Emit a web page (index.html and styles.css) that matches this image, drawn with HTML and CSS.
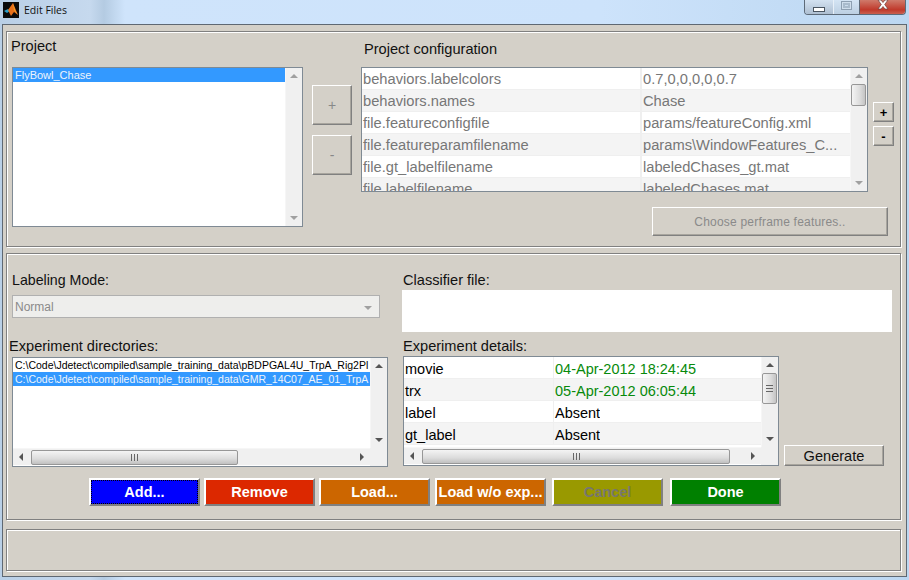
FILE: index.html
```html
<!DOCTYPE html>
<html lang="en">
<head>
    <meta charset="UTF-8">
    <title>Edit Files</title>
    <link rel="stylesheet" href="styles.css">
</head>
<body>

<!-- Title bar -->
<div class="titlebar">
    <svg class="app-icon" width="16" height="16" viewBox="0 0 16 16">
        <rect width="16" height="16" fill="#0a0a0a"/>
        <path d="M1 9 L5 7 L7 9 L4 11 Z" fill="#2a9fc9"/>
        <path d="M5 8 L10 1 L15 13 L11 10 L8 14 L6 10 Z" fill="#e8701a"/>
        <path d="M10 1 L12 8 L15 13 L11 8 Z" fill="#f5b02e"/>
    </svg>
    <span class="title-text">Edit Files</span>
    <div class="win-controls">
        <div class="win-btn win-min"><span></span></div>
        <div class="win-btn win-max"><span></span></div>
        <div class="win-btn win-close">
            <svg width="16" height="11" viewBox="0 0 16 11"><path d="M3 0 L6 0 L8 2.5 L10 0 L13 0 L9.700 4.500 L13 9 L10 9 L8 6.500 L6 9 L3 9 L6.300 4.500 Z" fill="#fff" stroke="#6b3a36" stroke-width="0.7"/></svg>
        </div>
    </div>
</div>

<div class="window">

    <!-- Project section -->
    <div class="panel panel-project">
        <div class="project-col">
            <div class="label project-label">Project</div>
            <div class="view project-list">
                <div class="view-main">
                    <div class="list-row selected">FlyBowl_Chase</div>
                </div>
                <div class="vscroll">
                    <span class="arrow up"></span>
                    <span class="track"></span>
                    <span class="arrow down"></span>
                </div>
            </div>
        </div>

        <div class="addremove-col">
            <button class="btn big-btn">+</button>
            <button class="btn big-btn">-</button>
        </div>

        <div class="config-col">
            <div class="label config-label">Project configuration</div>
            <div class="config-row">
                <div class="view config-table">
                    <div class="view-main">
                        <div class="row"><div class="cell key">behaviors.labelcolors</div><div class="cell">0.7,0,0,0,0,0.7</div></div>
                        <div class="row alt"><div class="cell key">behaviors.names</div><div class="cell">Chase</div></div>
                        <div class="row"><div class="cell key">file.featureconfigfile</div><div class="cell">params/featureConfig.xml</div></div>
                        <div class="row alt"><div class="cell key">file.featureparamfilename</div><div class="cell">params\WindowFeatures_C...</div></div>
                        <div class="row"><div class="cell key">file.gt_labelfilename</div><div class="cell">labeledChases_gt.mat</div></div>
                        <div class="row alt"><div class="cell key">file.labelfilename</div><div class="cell">labeledChases.mat</div></div>
                    </div>
                    <div class="vscroll">
                        <span class="arrow up"></span>
                        <span class="track"><span class="thumb thumb-config"></span></span>
                        <span class="arrow down"></span>
                    </div>
                </div>
                <div class="small-btns">
                    <button class="btn small-btn">+</button>
                    <button class="btn small-btn">-</button>
                </div>
            </div>
            <button class="btn perframe-btn">Choose perframe features..</button>
        </div>
    </div>

    <!-- Experiments section -->
    <div class="panel panel-exp">
        <div class="exp-grid">
            <div class="exp-left">
                <div class="label mode-label">Labeling Mode:</div>
                <div class="select">Normal<span class="arrow down"></span></div>
                <div class="label dirs-label">Experiment directories:</div>
                <div class="view exp-view">
                    <div class="view-main">
                        <div class="list-row dir-row">C:\Code\Jdetect\compiled\sample_training_data\pBDPGAL4U_TrpA_Rig2Pl</div>
                        <div class="list-row dir-row selected">C:\Code\Jdetect\compiled\sample_training_data\GMR_14C07_AE_01_TrpA</div>
                    </div>
                    <div class="vscroll">
                        <span class="arrow up"></span>
                        <span class="track"></span>
                        <span class="arrow down"></span>
                    </div>
                    <div class="hscroll">
                        <span class="arrow left"></span>
                        <span class="track"><span class="hthumb hthumb-dirs"><i></i></span></span>
                        <span class="arrow right"></span>
                    </div>
                    <div class="corner"></div>
                </div>
            </div>

            <div class="exp-right">
                <div class="label classifier-label">Classifier file:</div>
                <div class="classifier-box"></div>
                <div class="label details-label">Experiment details:</div>
                <div class="details-row">
                    <div class="view exp-view details-view">
                        <div class="view-main">
                            <div class="row"><div class="cell dkey">movie</div><div class="cell good">04-Apr-2012 18:24:45</div></div>
                            <div class="row alt"><div class="cell dkey">trx</div><div class="cell good">05-Apr-2012 06:05:44</div></div>
                            <div class="row"><div class="cell dkey">label</div><div class="cell">Absent</div></div>
                            <div class="row alt"><div class="cell dkey">gt_label</div><div class="cell">Absent</div></div>
                        </div>
                        <div class="vscroll">
                            <span class="arrow up"></span>
                            <span class="track"><span class="thumb thumb-details"><i></i></span></span>
                            <span class="arrow down"></span>
                        </div>
                        <div class="hscroll">
                            <span class="arrow left"></span>
                            <span class="track"><span class="hthumb hthumb-details"><i></i></span></span>
                            <span class="arrow right"></span>
                        </div>
                        <div class="corner"></div>
                    </div>
                    <button class="btn generate-btn">Generate</button>
                </div>
            </div>
        </div>

        <div class="action-row">
            <button class="btn action add"><span>Add...</span></button>
            <button class="btn action remove">Remove</button>
            <button class="btn action load">Load...</button>
            <button class="btn action load wo">Load w/o exp...</button>
            <button class="btn action cancel">Cancel</button>
            <button class="btn action done">Done</button>
        </div>
    </div>

    <!-- Status bar -->
    <div class="panel panel-status"></div>
</div>

</body>
</html>
```

FILE: styles.css
```css
* { box-sizing: border-box; }
html, body { height: 100%; }
body {
    margin: 0;
    width: 909px;
    height: 580px;
    overflow: hidden;
    font-family: "Liberation Sans", Arial, sans-serif;
    background: linear-gradient(90deg, #b9cfe6 0, #c6d9ee 90px, #b4cbe2 104px, #cfe4fb 125px, #cde3fb 600px, #bcd7f1 909px);
}

/* title bar */
.titlebar { height: 24px; display: flex; align-items: flex-start; padding-left: 3px; }
.app-icon { margin-top: 2px; }
.title-text { font-family: "Open Sans", sans-serif; font-size: 10.5px; line-height: 16px; margin: 2px 0 0 5px; color: #111; }
.win-controls { margin-left: auto; margin-right: 3px; display: flex; height: 15px; border: 1px solid #5d6a78; border-top: 0; border-radius: 0 0 4px 4px; overflow: hidden; }
.win-btn { display: flex; align-items: center; justify-content: center; }
.win-min { width: 29px; background: linear-gradient(#d3e2f1, #aebfd1); border-right: 1px solid #e8f0f8; }
.win-min span { width: 12px; height: 5px; margin-top: 5px; background: #fff; border: 1px solid #4a5561; }
.win-max { width: 26px; background: linear-gradient(#d4e4f4, #bccfe2); border-right: 1px solid #5d6a78; }
.win-max span { width: 11px; height: 9px; margin-bottom: 3px; border: 1px solid #8ea0b2; box-shadow: inset 0 0 0 1px #cfdeec, inset 0 0 0 3px #a9bbcc; }
.win-close { width: 45px; align-items: flex-start; background: linear-gradient(#cf7a6b, #c0392b 70%, #c9604f); }

/* window body */
.window {
    height: 553px;
    margin: 0 2px 0 2px;
    padding: 6px 5px 6px 3px;
    background: #d4d0c8;
    border: 1px solid #5f6872;
}
.panel {
    border: 1px solid #808080;
    box-shadow: 1px 1px 0 #fff, inset 1px 1px 0 #fff;
}
.panel-project { height: 216px; display: flex; padding: 0 0 0 5px; }
.panel-exp { height: 267px; margin-top: 6px; padding: 0; }
.panel-status { height: 42px; margin-top: 9px; }

.label { font-size: 14.6px; line-height: 16px; color: #111; }

/* scrolled views */
.view { display: grid; grid-template-columns: 1fr 17px; background: #fff; border: 1px solid #7f8a94; }
.view-main { overflow: hidden; min-width: 0; }
.vscroll { display: flex; flex-direction: column; align-items: center; background: #f0f0f0; border-left: 1px solid #f6f6f6; }
.hscroll { display: flex; align-items: center; background: #f0f0f0; border-top: 1px solid #f6f6f6; height: 17px; }
.corner { background: #f0f0f0; }
.track { flex: 1; position: relative; align-self: stretch; display: flex; }
.vscroll .arrow.up { margin-top: 6px; }
.vscroll .arrow.down { margin-bottom: 6px; }
.arrow { width: 0; height: 0; flex: none; border: 4px solid transparent; }
.arrow.up { border-top: 0; border-bottom: 4px solid #a0a0a0; }
.arrow.down { border-bottom: 0; border-top: 4px solid #a0a0a0; }
.arrow.left { border-left: 0; border-right: 4px solid #555; margin-left: 6px; }
.arrow.right { border-right: 0; border-left: 4px solid #555; margin-right: 6px; }
.exp-view .arrow.up { border-bottom-color: #555; }
.exp-view .arrow.down { border-top-color: #555; }
.thumb { display: flex; align-items: center; justify-content: center; width: 15px; background: linear-gradient(90deg, #f4f4f4, #dcdcdc 60%, #c4c4c4); border: 1px solid #979797; border-radius: 2px; }
.thumb i { width: 7px; height: 7px; border-top: 1px solid #666; border-bottom: 1px solid #666; background: linear-gradient(#fff0 2px, #666 2px, #666 3px, #fff0 3px); }
.hthumb { display: flex; align-items: center; justify-content: center; height: 15px; margin-top: 1px; background: linear-gradient(#f4f4f4, #dcdcdc 60%, #c0c0c0); border: 1px solid #979797; border-radius: 2px; }
.hthumb i { width: 7px; height: 7px; border-left: 1px solid #666; border-right: 1px solid #666; background: linear-gradient(90deg, #fff0 2px, #666 2px, #666 3px, #fff0 3px); }

.list-row { font-size: 11px; line-height: 14px; padding-left: 2px; white-space: nowrap; overflow: hidden; color: #000; }
.list-row.selected { background: #3399ff; color: #eef4fb; }

/* generic buttons */
.btn {
    display: block;
    padding: 0;
    font-family: "Liberation Sans", Arial, sans-serif;
    background: #d4d0c8;
    border: 1px solid;
    border-color: #fff #808080 #808080 #fff;
    box-shadow: inset -1px -1px 0 #a8a59e;
}

/* project section */
.project-col { width: 291px; flex: none; }
.project-label { margin: 6px 0 0 -1px; }
.project-list { height: 160px; margin-top: 13px; }
.addremove-col { width: 58px; flex: none; padding: 53px 0 0 9px; }
.big-btn { width: 40px; height: 40px; font-size: 14px; color: #888; }
.big-btn + .big-btn { margin-top: 10px; }

.config-col { flex: 1; min-width: 0; }
.config-label { margin: 9px 0 0 3px; }
.config-row { display: flex; margin-top: 10px; }
.config-table { width: 507px; height: 125px; }
.row { display: flex; height: 22px; border-bottom: 1px solid #efefef; }
.row.alt { background: #f4f4f4; }
.cell { font-size: 14.5px; line-height: 21px; padding-left: 1px; white-space: nowrap; overflow: hidden; }
.config-table .view-main { color: #777; }
.config-table .cell { flex: none; width: 203px; padding-top: 1px; font-size: 14.7px; }
.config-table .cell.key { width: 280px; border-right: 2px solid #efefef; }
.small-btns { padding: 35px 0 0 5px; }
.small-btn { width: 21px; height: 20px; font-size: 13px; font-weight: bold; color: #000; }
.small-btn + .small-btn { margin-top: 4px; }
.thumb-config { height: 22px; margin-top: 6px; }
.perframe-btn { width: 236px; height: 29px; margin: 15px 0 0 291px; font-size: 12px; color: #8a8a8a; letter-spacing: 0.2px; }

/* experiments section */
.exp-grid { display: flex; height: 212px; }
.exp-left { width: 396px; flex: none; padding-left: 5px; }
.mode-label { margin: 18px 0 0 0; font-size: 14.2px; }
.select { position: relative; width: 368px; height: 23px; margin-top: 7px; padding-left: 2px; font-size: 12px; line-height: 22px; color: #8a8a8a; background: #eeeeec; border: 1px solid #b0b0b0; }
.select .arrow { position: absolute; right: 7px; top: 10px; }
.dirs-label { margin: 20px 0 0 -3px; }
.exp-view { grid-template-rows: 1fr 18px; width: 376px; height: 110px; margin-top: 3px; }
.dir-row { font-size: 10.5px; line-height: 14px; }
.hthumb-dirs { width: 207px; }
.exp-left .hscroll .track { margin-left: 8px; }
.exp-right { flex: 1; min-width: 0; }
.classifier-label { margin: 18px 0 0 0; }
.classifier-box { width: 490px; height: 42px; margin: 2px 0 0 -1px; background: #fff; }
.details-label { margin: 6px 0 0 0; }
.details-row { display: flex; align-items: flex-end; margin-top: 2px; }
.details-view { margin-top: 0; }
.details-view .cell { line-height: 21px; padding-top: 2px; color: #000; }
.dkey { width: 150px; flex: none; border-right: 1px solid #efefef; }
.good { color: #078a0b !important; }
.thumb-details { height: 31px; margin-top: 6px; }
.hthumb-details { width: 308px; }
.details-view .hscroll .track { margin-left: 8px; }
.generate-btn { width: 100px; height: 21px; margin-left: 5px; font-size: 14.6px; color: #111; }

.action-row { display: flex; margin: 12px 0 0 82px; }
.action { width: 111px; height: 28px; margin-right: 4px; font-size: 14.500px; font-weight: bold; color: #fff; border-width: 2px; box-shadow: none; }
.action.add { background: #0000ff; }
.action.add span { display: block; height: 22px; margin: 0 1px; line-height: 22px; outline: 1px dotted #000; }
.action.remove { background: #dc2800; }
.action.load { background: #cc6600; }
.action.wo { margin-left: 1px; margin-right: 6px; }
.action.cancel { background: #999900; color: #77776f; margin-right: 7px; }
.action.done { background: #008000; }
```
